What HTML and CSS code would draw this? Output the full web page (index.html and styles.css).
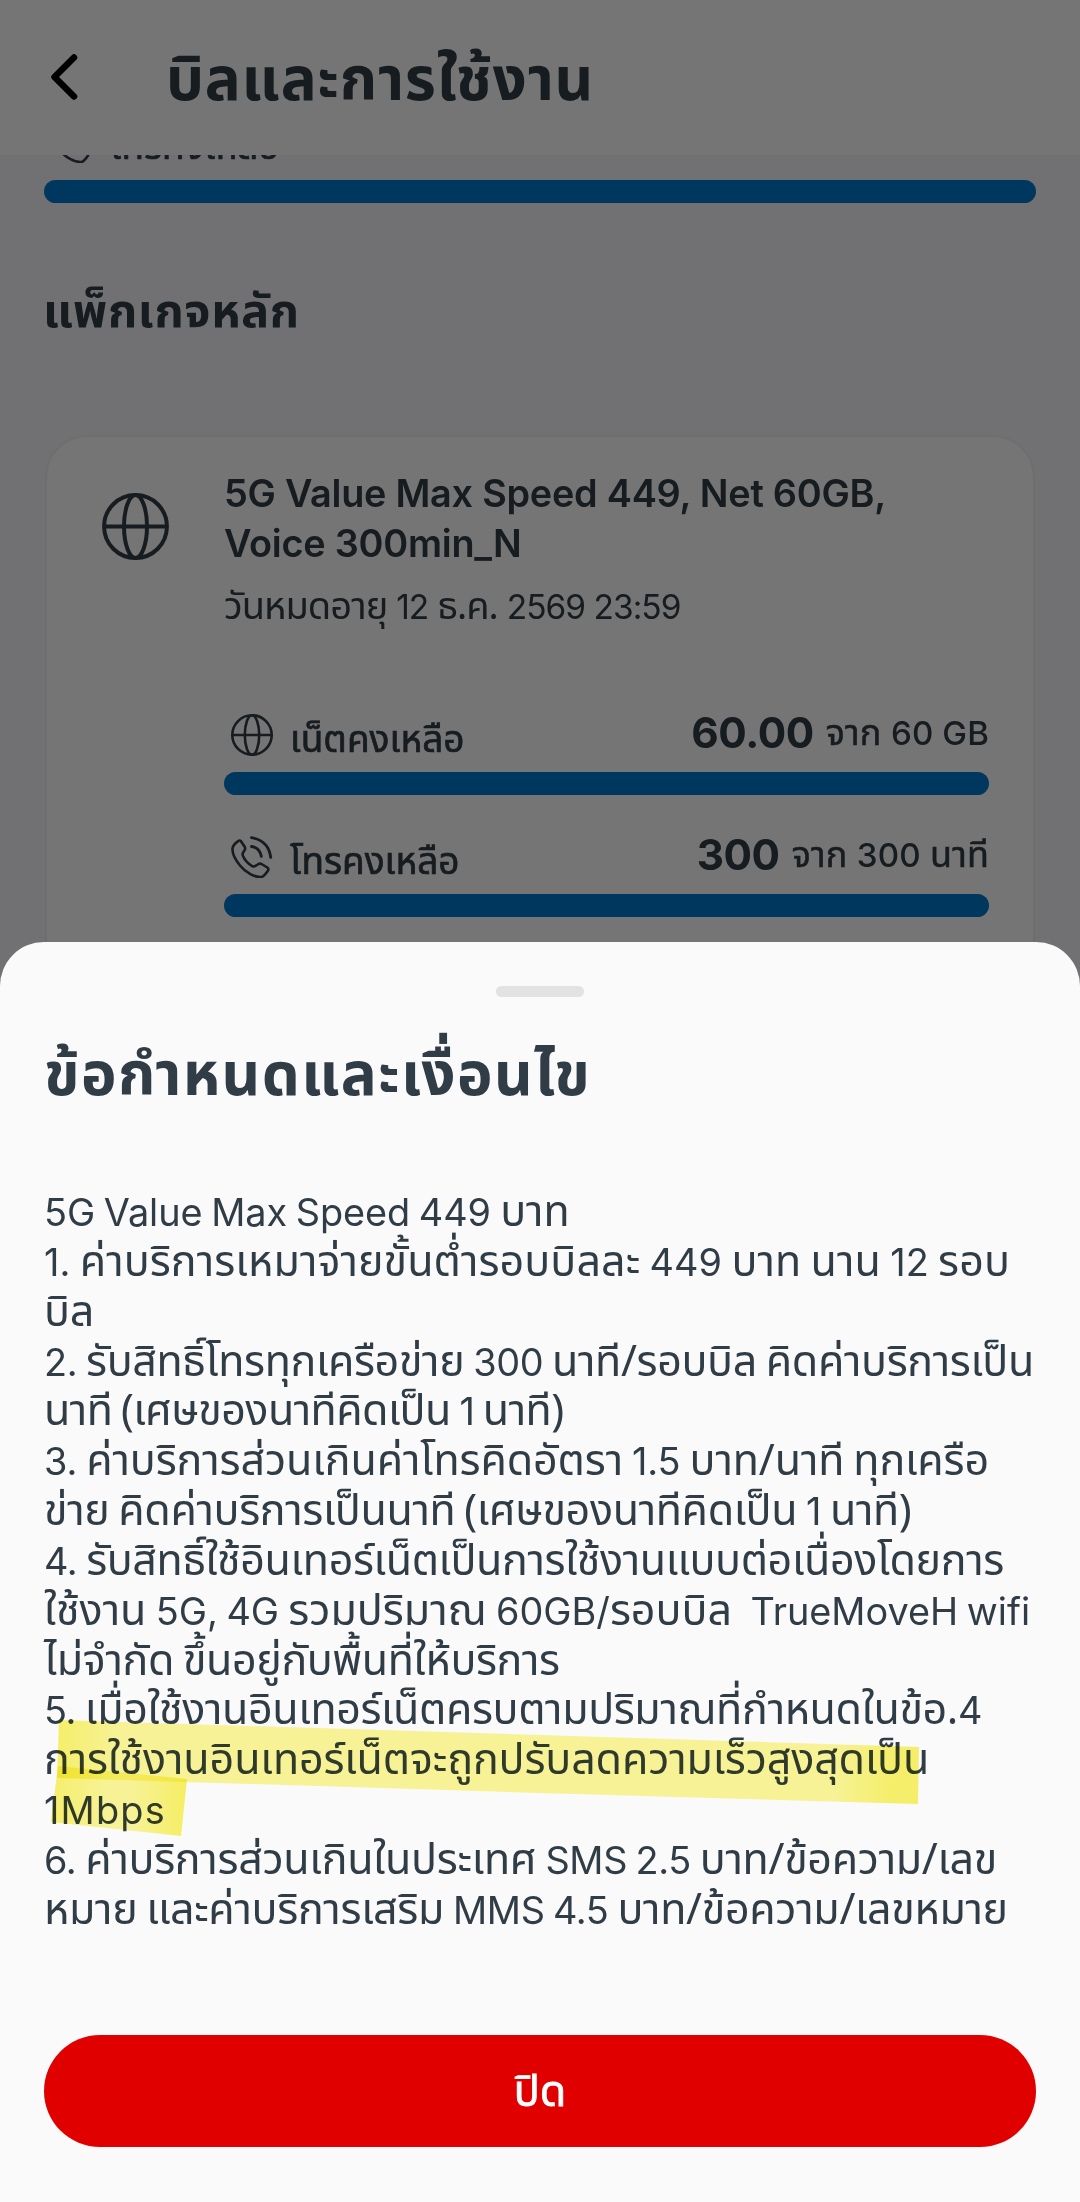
FILE: index.html
```html
<!DOCTYPE html>
<html lang="th">
<head>
<meta charset="utf-8">
<title>บิลและการใช้งาน</title>
<link rel="stylesheet" href="styles.css">
</head>
<body>
<svg class="defs" aria-hidden="true">
  <symbol id="globe" viewBox="0 0 42 42"><circle cx="21" cy="21" r="19.7"/><ellipse cx="21" cy="21" rx="7.2" ry="19.7"/><path d="M1 21H41"/></symbol>
  <symbol id="phone" viewBox="0 0 42 42"><path d="M1.5 12.5C1.8 9.5 5 6.5 7.5 4.8Q8.8 4 10 5.2L13.8 11Q14.6 12.5 13.6 14.2L12 16.8Q11.2 18.5 12 20Q14.5 26 21 30Q23 31 24.5 29.8L27.5 28Q29 27.2 30.5 28L36.3 31.5Q38 32.8 37 34.5C35 37.5 33 40 31 40.8C24 41.8 14.5 36.5 9 29.5C4 23.5 1.2 17.5 1.5 12.5Z"/><path stroke-width="2.9" d="M20.5 1.6Q37.5 4.5 39.7 21.3M20.5 10.5Q28.5 11.5 30.3 20.3"/></symbol>
</svg>
<div class="screen">
  <header class="bar">
    <svg class="back" viewBox="0 0 30 46"><path d="M24 3.5L4.5 23L24 42.5"/></svg>
    <h1>บิลและการใช้งาน</h1>
  </header>
  <main class="content">
    <div class="usage first">
      <div class="row">
        <svg class="icon"><use href="#phone"/></svg>
        <span class="label">โทรคงเหลือ</span>
        <b class="amount"><i>300</i></b>
      </div>
      <div class="meter"></div>
    </div>
    <h2>แพ็กเกจหลัก</h2>
    <section class="card">
      <svg class="big"><use href="#globe"/></svg>
      <div class="detail">
        <div class="name"><i>5G Value Max Speed 449, Net 60GB,</i></div>
        <div class="name"><i>Voice 300min_N</i></div>
        <div class="date">วันหมดอายุ <i>12</i> ธ.ค. <i>2569 23:59</i></div>
        <div class="usage">
          <div class="row">
            <svg class="icon"><use href="#globe"/></svg>
            <span class="label">เน็ตคงเหลือ</span>
            <b class="amount"><i>60.00</i></b>
            <span class="total">จาก <i>60 GB</i></span>
          </div>
          <div class="meter"></div>
        </div>
        <div class="usage">
          <div class="row">
            <svg class="icon"><use href="#phone"/></svg>
            <span class="label">โทรคงเหลือ</span>
            <b class="amount"><i>300</i></b>
            <span class="total">จาก <i>300</i> นาที</span>
          </div>
          <div class="meter"></div>
        </div>
      </div>
    </section>
  </main>
  <div class="scrim"></div>
  <section class="sheet">
    <div class="handle"></div>
    <h3>ข้อกำหนดและเงื่อนไข</h3>
    <div class="terms">
      <div><i>5G Value Max Speed 449</i> บาท</div>
      <div><i>1.</i> ค่าบริการเหมาจ่ายขั้นต่ำรอบบิลละ <i>449</i> บาท นาน <i>12</i> รอบ</div>
      <div>บิล</div>
      <div><i>2.</i> รับสิทธิ์โทรทุกเครือข่าย <i>300</i> นาที/รอบบิล คิดค่าบริการเป็น</div>
      <div>นาที (เศษของนาทีคิดเป็น <i>1</i> นาที)</div>
      <div><i>3.</i> ค่าบริการส่วนเกินค่าโทรคิดอัตรา <i>1.5</i> บาท/นาที ทุกเครือ</div>
      <div>ข่าย คิดค่าบริการเป็นนาที (เศษของนาทีคิดเป็น <i>1</i> นาที)</div>
      <div><i>4.</i> รับสิทธิ์ใช้อินเทอร์เน็ตเป็นการใช้งานแบบต่อเนื่องโดยการ</div>
      <div>ใช้งาน <i>5G, 4G</i> รวมปริมาณ <i>60GB/</i>รอบบิล &nbsp;<i>TrueMoveH wifi</i></div>
      <div>ไม่จำกัด ขึ้นอยู่กับพื้นที่ให้บริการ</div>
      <div><i>5.</i> เมื่อใช้งานอินเทอร์เน็ตครบตามปริมาณที่กำหนดในข้อ.<i>4</i></div>
      <div>การใช้งานอินเทอร์เน็ตจะถูกปรับลดความเร็วสูงสุดเป็น</div>
      <div><i>1Mbps</i></div>
      <div><i>6.</i> ค่าบริการส่วนเกินในประเทศ <i>SMS 2.5</i> บาท/ข้อความ/เลข</div>
      <div>หมาย และค่าบริการเสริม <i>MMS 4.5</i> บาท/ข้อความ/เลขหมาย</div>
      <svg class="marker" viewBox="0 0 1080 150">
        <defs>
          <linearGradient id="m1"><stop offset="0" stop-color="#faf36c"/><stop offset=".07" stop-color="#fcf799"/><stop offset=".9" stop-color="#fcf799"/><stop offset=".97" stop-color="#faf36c"/></linearGradient>
          <linearGradient id="m2"><stop offset="0" stop-color="#faf36c"/><stop offset=".4" stop-color="#fcf799"/><stop offset=".6" stop-color="#fcf799"/><stop offset="1" stop-color="#faf364"/></linearGradient>
        </defs>
        <path fill="url(#m1)" d="M59 20L540 35L919 47L918 104L540 93L57 78Z"/>
        <path class="stroke2" fill="url(#m2)" d="M58 66L187 79L181 136L51 122Z"/>
      </svg>
    </div>
    <button class="close">ปิด</button>
  </section>
</div>
</body>
</html>
```
FILE: styles.css
```css
* { box-sizing: border-box; margin: 0; }
body { font-family: "Noto Sans Thai", "Noto Sans", sans-serif; color: #303c46; background: #f2f2f7; }
i { font-family: Inter, sans-serif; font-style: normal; font-size: .88em; line-height: 1; }
.defs { position: absolute; width: 0; height: 0; }
.screen { position: relative; height: 2202px; overflow: hidden; white-space: nowrap; }

/* App bar */
.bar { display: flex; align-items: center; height: 155px; padding-left: 50px; background: #fafafa; }
.back { width: 30px; height: 46px; margin-top: -2px; fill: none; stroke: #000; stroke-width: 6.5; stroke-linecap: round; stroke-linejoin: round; }
h1 { margin: 8px 0 0 86px; font-size: 60px; line-height: 80px; font-weight: 700; letter-spacing: .8px; }

/* Scrolled page content */
.content { height: 800px; padding: 0 44px; overflow: hidden; }
.row { display: flex; align-items: center; height: 60px; padding: 0 0 15px 7px; }
.icon { width: 42px; height: 42px; fill: none; stroke: currentColor; stroke-width: 2.6; stroke-linejoin: round; stroke-linecap: round; }
.label { margin: 13px auto 0 17px; font-size: 37px; line-height: 50px; -webkit-text-stroke: .7px; }
.amount { margin-top: -2px; font-size: 48px; line-height: 50px; letter-spacing: -.4px; }
.total { margin: -1px 0 0 12px; font-size: 36px; line-height: 50px; -webkit-text-stroke: .5px; letter-spacing: .1px; }
.total i { font-size: .92em; font-weight: 500; -webkit-text-stroke: 0; }
.meter { height: 23px; border-radius: 12px; background: #0076c9; }
.first { margin-top: -45px; }
.first .row { height: 70px; padding-bottom: 7px; }
.first .amount { margin: 0 211px 1px 0; letter-spacing: 0; }
h2 { margin: 75px 0 0 -1px; font-size: 47px; line-height: 70px; font-weight: 700; letter-spacing: .6px; }
.card { display: flex; height: 700px; margin: 87px 1px 0; padding: 40px 44px 0 55px; border: 2px solid #ebebeb; border-radius: 42px; background: #fafafa; }
.big { flex: none; width: 67px; height: 67px; margin: 16px 55px 0 0; fill: none; stroke: currentColor; stroke-width: 2.5; }
.detail { flex: 1; margin-top: -8px; }
.name { height: 50px; font-size: 43px; line-height: 50px; font-weight: 600; letter-spacing: -.25px; }
.date { margin: 14px 0 79px; font-size: 38px; line-height: 50px; letter-spacing: -.95px; }
.usage + .usage { margin-top: 39px; }

.scrim { position: absolute; inset: 0; background: rgba(0, 0, 0, .532); }

/* Bottom sheet */
.sheet { position: absolute; left: 0; right: 0; bottom: 0; height: 1260px; padding: 44px; border-radius: 44px 44px 0 0; background: #fafafa; }
.handle { width: 88px; height: 11px; margin: 0 auto; border-radius: 6px; background: #e2e2e2; }
h3 { margin-top: 40px; font-size: 60px; line-height: 80px; font-weight: 700; letter-spacing: 1.4px; }
.terms { position: relative; margin-top: 71px; font-size: 43px; word-spacing: -2px; }
.terms div { height: 49.85px; line-height: 49.85px; letter-spacing: -.32px; }
.terms div:nth-child(1) { letter-spacing: -.04px; }
.terms div:nth-child(2) { letter-spacing: .08px; }
.terms div:nth-child(4) { letter-spacing: -.36px; }
.terms div:nth-child(5) { letter-spacing: -.57px; }
.terms div:nth-child(6) { letter-spacing: -.12px; }
.terms div:nth-child(7) { letter-spacing: -.36px; }
.terms div:nth-child(8) { letter-spacing: -.37px; }
.terms div:nth-child(9) { letter-spacing: 0; }
.terms div:nth-child(10), .terms div:nth-child(11) { letter-spacing: -.4px; }
.terms div:nth-child(12) { letter-spacing: -.14px; }
.terms div:nth-child(13) { letter-spacing: 1.2px; }
.marker { position: absolute; left: -44px; top: 512px; width: 1080px; height: 150px; mix-blend-mode: multiply; }
.stroke2 { mix-blend-mode: multiply; }
.close { display: block; width: 100%; height: 112px; margin-top: 99px; padding: 4px 0 0; border: 0; border-radius: 56px; background: #e10000; color: #fff; font: 43px/60px "Noto Sans Thai", sans-serif; -webkit-text-stroke: .8px; }
```
